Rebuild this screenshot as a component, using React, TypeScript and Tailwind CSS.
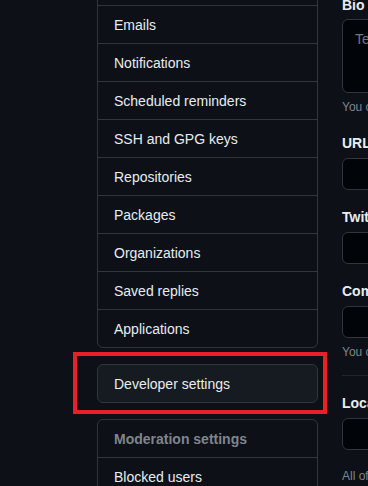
const MENU = [
  'Emails',
  'Notifications',
  'Scheduled reminders',
  'SSH and GPG keys',
  'Repositories',
  'Packages',
  'Organizations',
  'Saved replies',
  'Applications',
]

const row = 'px-4 pt-[9px] pb-[7px] text-sm leading-[21px]'

function Label({ children, className = '' }: { children: React.ReactNode; className?: string }) {
  return <div className={`h-[21px] text-sm font-bold leading-[21px] text-[#e6edf3] ${className}`}>{children}</div>
}

function Input({ className = '' }: { className?: string }) {
  return <div className={`h-[32px] rounded-md border border-[#30363d] bg-[#010409] ${className}`} />
}

function Note({ children, className = '' }: { children: React.ReactNode; className?: string }) {
  return <div className={`whitespace-nowrap text-xs leading-[18px] text-[#7d8590] ${className}`}>{children}</div>
}

export default function App() {
  return (
    <div
      className="relative h-[486px] w-[368px] overflow-hidden bg-[#0d1117]"
      style={{ fontFamily: '"Liberation Sans", Arial, sans-serif' }}
    >
      <div className="flex gap-6 pl-[97px]">
        {/* Sidebar */}
        <div className="w-[221px] shrink-0">
          <nav className="-mt-[32px] divide-y divide-[#30363d] overflow-hidden rounded-md border border-[#30363d]">
            {/* row scrolled out of view above */}
            <div className="h-[37px]" />
            {MENU.map((m) => (
              <div key={m} className={`${row} text-[#e6edf3]`}>
                {m}
              </div>
            ))}
          </nav>

          <div className={`mt-4 rounded-md border border-[#30363d] bg-[#161b22] ${row} text-[#e6edf3]`}>
            Developer settings
          </div>

          <div className="mt-4 divide-y divide-[#30363d] rounded-md border border-[#30363d]">
            <div className={`${row} font-bold text-[#7d8590]`}>Moderation settings</div>
            <div className={`${row} text-[#e6edf3]`}>Blocked users</div>
          </div>
        </div>

        {/* Profile form */}
        <div className="w-[400px] shrink-0">
          <Label className="-mt-[5px]">Bio</Label>
          <div className="mt-[3px] h-[74px] rounded-md border border-[#30363d] bg-[#010409] px-3 pt-[9px] text-sm leading-[21px] text-[#6e7681]">
            Tell us a little bit about yourself
          </div>
          <Note className="mt-[5px]">You can @mention other users and organizations to link to them.</Note>

          <Label className="mt-[17px]">URL</Label>
          <Input className="mt-[4px]" />

          <Label className="mt-[17px]">Twitter username</Label>
          <Input className="mt-[4px]" />

          <Label className="mt-[17px]">Company</Label>
          <Input className="mt-[4px]" />
          <Note className="mt-[5px]">You can @mention your company's GitHub organization to link it.</Note>

          <div className="mt-[14px] h-px bg-[#21262d]" />

          <Label className="mt-[17px]">Location</Label>
          <Input className="mt-[4px]" />

          <Note className="mt-[17px]">All of the fields on this page are optional and can be deleted at any time.</Note>
        </div>
      </div>

      {/* highlight */}
      <div className="pointer-events-none absolute left-[73px] top-[352px] h-[62px] w-[254px] border-4 border-[#e8202a]" />
    </div>
  )
}
